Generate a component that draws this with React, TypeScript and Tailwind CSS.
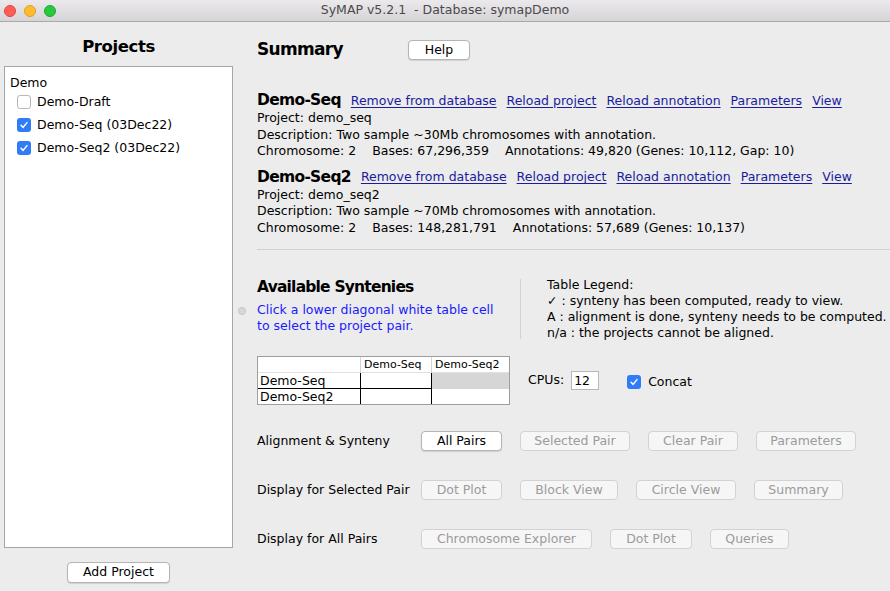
import React from 'react';

const font = "font-['DejaVu_Sans',sans-serif]";

function Check({ checked }: { checked: boolean }) {
  if (!checked) {
    return <span className="block w-[14px] h-[14px] rounded-[3px] bg-white border border-[#b8b8b8] shrink-0" />;
  }
  return (
    <span className="flex w-[14px] h-[14px] rounded-[3px] bg-[#2f7cf6] items-center justify-center shrink-0">
      <svg width="10" height="10" viewBox="0 0 10 10">
        <path d="M2 5.3 L4.1 7.4 L8 2.6" stroke="white" strokeWidth="1.5" fill="none" strokeLinecap="round" strokeLinejoin="round" />
      </svg>
    </span>
  );
}

const Btn: React.FC<{ label: string; w: string; enabled?: boolean }> = ({ label, w, enabled }) => (
  <div
    className={`${w} h-[20px] flex items-center justify-center rounded-[4px] border text-[12.5px] ${
      enabled
        ? 'bg-white border-[#b4b4b4] text-black shadow-[0_1px_1px_rgba(0,0,0,0.12)]'
        : 'bg-[#f6f6f6] border-[#d2d2d2] text-[#9b9b9b]'
    }`}
  >
    {label}
  </div>
);

const Link: React.FC<{ children: React.ReactNode }> = ({ children }) => (
  <span className="text-[#1b1b9e] underline underline-offset-2">{children}</span>
);

const ProjectBlock: React.FC<{ name: string; dir: string; desc: string; stats: string[] }> = ({ name, dir, desc, stats }) => (
  <div>
    <div className="flex items-center h-[18px] gap-[10px]">
      <span className="text-[15.5px] font-bold tracking-[-0.7px]">{name}</span>
      <Link>Remove from database</Link>
      <Link>Reload project</Link>
      <Link>Reload annotation</Link>
      <Link>Parameters</Link>
      <Link>View</Link>
    </div>
    <div className="leading-[16.5px]">
      <div>Project: {dir}</div>
      <div>Description: {desc}</div>
      <div className="flex gap-[16px]">
        {stats.map(s => (
          <span key={s}>{s}</span>
        ))}
      </div>
    </div>
  </div>
);

export default function App() {
  const projects = [
    { name: 'Demo-Draft', checked: false },
    { name: 'Demo-Seq (03Dec22)', checked: true },
    { name: 'Demo-Seq2 (03Dec22)', checked: true },
  ];

  return (
    <div className={`w-[890px] h-[591px] bg-[#ececec] flex flex-col overflow-hidden text-[12.5px] text-black ${font}`}>
      {/* Title bar */}
      <div className="relative h-[22px] shrink-0 bg-gradient-to-b from-[#ebe9eb] to-[#d6d4d6] border-b border-[#a9a9a9] flex items-center justify-center">
        <div className="absolute left-[4px] top-[5px] flex gap-[8px]">
          <span className="w-[12px] h-[12px] rounded-full bg-[#fd5f57] border border-[#e0443e]" />
          <span className="w-[12px] h-[12px] rounded-full bg-[#febc2e] border border-[#dea123]" />
          <span className="w-[12px] h-[12px] rounded-full bg-[#28c840] border border-[#1aab29]" />
        </div>
        <span className="text-[12.5px] text-[#4a4a4a]">SyMAP v5.2.1&nbsp; - Database: symapDemo</span>
      </div>

      <div className="flex flex-1 min-h-0">
        {/* Left: projects */}
        <div className="w-[237px] shrink-0 flex flex-col pl-[4px] pr-[4px]">
          <div className="h-[44px] flex items-center justify-center text-[16.5px] font-bold tracking-[-0.4px] pt-[7px]">Projects</div>
          <div className="flex-1 bg-white border border-[#a6a6a6] px-[5px] pt-[7px]">
            <div className="h-[17px] leading-[17px]">Demo</div>
            <div className="flex flex-col gap-[9px] mt-[4px] pl-[7px]">
              {projects.map(p => (
                <div key={p.name} className="flex items-center gap-[6px] h-[14px]">
                  <Check checked={p.checked} />
                  <span>{p.name}</span>
                </div>
              ))}
            </div>
          </div>
          <div className="h-[43px] flex justify-center pt-[14px]">
            <div className="w-[103px] h-[21px] flex items-center justify-center bg-white border border-[#b4b4b4] rounded-[4px] shadow-[0_1px_1px_rgba(0,0,0,0.12)] text-[12.5px]">
              Add Project
            </div>
          </div>
        </div>

        {/* Right: summary */}
        <div className="relative flex-1 pl-[20px]">
          <span className="absolute left-[1px] top-[285px] w-[8px] h-[8px] rounded-full bg-[#d8d8d8] border border-[#c4c4c4]" />

          <div className="flex items-center h-[22px] mt-[17px]">
            <span className="text-[17px] font-bold tracking-[-0.7px] w-[151px]">Summary</span>
            <div className="w-[62px] h-[20px] flex items-center justify-center bg-white border border-[#b4b4b4] rounded-[4px] shadow-[0_1px_1px_rgba(0,0,0,0.12)]">
              Help
            </div>
          </div>

          <div className="mt-[31px] flex flex-col gap-[9px]">
            <ProjectBlock
              name="Demo-Seq"
              dir="demo_seq"
              desc="Two sample ~30Mb chromosomes with annotation."
              stats={['Chromosome: 2', 'Bases: 67,296,359', 'Annotations: 49,820 (Genes: 10,112, Gap: 10)']}
            />
            <ProjectBlock
              name="Demo-Seq2"
              dir="demo_seq2"
              desc="Two sample ~70Mb chromosomes with annotation."
              stats={['Chromosome: 2', 'Bases: 148,281,791', 'Annotations: 57,689 (Genes: 10,137)']}
            />
          </div>

          <div className="mt-[13px] h-px bg-[#d0d0d0]" />

          {/* Available syntenies */}
          <div className="flex mt-[27px]">
            <div className="w-[263px]">
              <div className="text-[15.5px] font-bold tracking-[-0.8px] h-[20px] leading-[20px]">Available Syntenies</div>
              <div className="mt-[5px] text-[#1a1aff] leading-[16px]">
                <div>Click a lower diagonal white table cell</div>
                <div>to select the project pair.</div>
              </div>
            </div>
            <div className="w-px bg-[#d2d2d2] h-[60px] mt-[2px]" />
            <div className="pl-[26px] leading-[16px]">
              <div>Table Legend:</div>
              <div>✓ : synteny has been computed, ready to view.</div>
              <div>A : alignment is done, synteny needs to be computed.</div>
              <div>n/a : the projects cannot be aligned.</div>
            </div>
          </div>

          <div className="flex items-center mt-[15px]">
            <div className="w-[253px] border border-[#9e9e9e] bg-white text-[12.5px]">
              <div className="grid grid-cols-[102px_71px_1fr] h-[16px] text-[11px] leading-[16px] border-b border-[#e0e0e0]">
                <div />
                <div className="border-l border-[#d4d4d4] pl-[3px]">Demo-Seq</div>
                <div className="border-l border-[#d4d4d4] pl-[3px]">Demo-Seq2</div>
              </div>
              <div className="grid grid-cols-[102px_71px_1fr] h-[16px] leading-[16px] border-b border-black">
                <div className="pl-[2px]">Demo-Seq</div>
                <div className="border-l border-black" />
                <div className="border-l border-black bg-[#d6d6d6]" />
              </div>
              <div className="grid grid-cols-[102px_71px_1fr] h-[15px] leading-[15px]">
                <div className="pl-[2px]">Demo-Seq2</div>
                <div className="border-l border-black" />
                <div className="border-l border-black" />
              </div>
            </div>
            <span className="ml-[18px]">CPUs:</span>
            <div className="ml-[7px] w-[28px] h-[19px] bg-white border border-[#b8b8b8] pl-[2px] leading-[17px]">12</div>
            <div className="ml-[28px] flex items-center gap-[7px] mt-[3px]">
              <Check checked />
              <span>Concat</span>
            </div>
          </div>

          <div className="mt-[26px] flex flex-col gap-[29px]">
            <div className="flex items-center">
              <span className="w-[164px]">Alignment &amp; Synteny</span>
              <div className="flex items-center">
                <Btn label="All Pairs" w="w-[81px]" enabled />
                <div className="ml-[18px]"><Btn label="Selected Pair" w="w-[110px]" /></div>
                <div className="ml-[18px]"><Btn label="Clear Pair" w="w-[90px]" /></div>
                <div className="ml-[18px]"><Btn label="Parameters" w="w-[100px]" /></div>
              </div>
            </div>
            <div className="flex items-center">
              <span className="w-[164px]">Display for Selected Pair</span>
              <div className="flex items-center">
                <Btn label="Dot Plot" w="w-[81px]" />
                <div className="ml-[18px]"><Btn label="Block View" w="w-[98px]" /></div>
                <div className="ml-[18px]"><Btn label="Circle View" w="w-[100px]" /></div>
                <div className="ml-[18px]"><Btn label="Summary" w="w-[89px]" /></div>
              </div>
            </div>
            <div className="flex items-center">
              <span className="w-[164px]">Display for All Pairs</span>
              <div className="flex items-center">
                <Btn label="Chromosome Explorer" w="w-[171px]" />
                <div className="ml-[18px]"><Btn label="Dot Plot" w="w-[82px]" /></div>
                <div className="ml-[18px]"><Btn label="Queries" w="w-[79px]" /></div>
              </div>
            </div>
          </div>
        </div>
      </div>
    </div>
  );
}
